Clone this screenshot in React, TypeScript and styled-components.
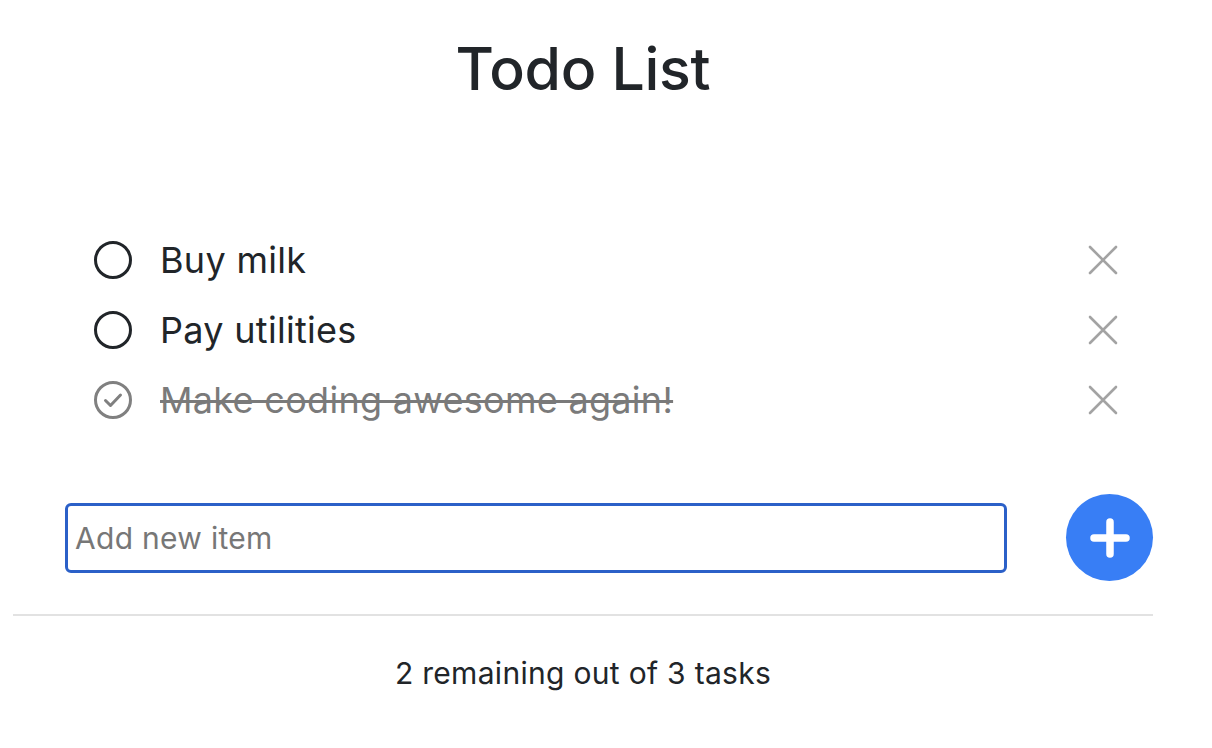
import styled, { createGlobalStyle } from "styled-components";
import { useState } from "react";

const GlobalStyle = createGlobalStyle`
  html, body {
    margin: 0;
    padding: 0;
    background: #ffffff;
    font-family: Inter, "Noto Sans", "Liberation Sans", sans-serif;
    color: #212529;
  }
`;

type Todo = { id: number; text: string; done: boolean };

const TODOS: Todo[] = [
  { id: 1, text: "Buy milk", done: false },
  { id: 2, text: "Pay utilities", done: false },
  { id: 3, text: "Make coding awesome again!", done: true },
];

export default function App() {
  const [todos, setTodos] = useState(TODOS);
  const [value, setValue] = useState("");

  const remaining = todos.filter((t) => !t.done).length;

  const toggle = (id: number) =>
    setTodos(todos.map((t) => (t.id === id ? { ...t, done: !t.done } : t)));

  const remove = (id: number) => setTodos(todos.filter((t) => t.id !== id));

  const handleSubmit = (e: React.FormEvent<HTMLFormElement>) => {
    e.preventDefault();
    if (!value) return;
    setTodos([...todos, { id: Date.now(), text: value, done: false }]);
    setValue("");
  };

  return (
    <Page>
      <GlobalStyle />
      <Title>Todo List</Title>

      <List>
        {todos.map((todo) => (
          <Row key={todo.id}>
            <CheckButton onClick={() => toggle(todo.id)} aria-label="toggle">
              {todo.done ? (
                <svg width="40" height="40" viewBox="0 0 40 40">
                  <circle cx="20" cy="20" r="17.5" fill="none" stroke="#808080" strokeWidth="3" />
                  <path
                    d="M12.5 20.5 L17.5 25.5 L27.5 15"
                    fill="none"
                    stroke="#808080"
                    strokeWidth="3"
                    strokeLinecap="round"
                    strokeLinejoin="round"
                  />
                </svg>
              ) : (
                <svg width="40" height="40" viewBox="0 0 40 40">
                  <circle cx="20" cy="20" r="17.5" fill="none" stroke="#212529" strokeWidth="3" />
                </svg>
              )}
            </CheckButton>
            <Label $done={todo.done}>{todo.text}</Label>
            <RemoveButton onClick={() => remove(todo.id)} aria-label="remove">
              <svg width="30" height="30" viewBox="0 0 30 30">
                <path
                  d="M2 2 L28 28 M28 2 L2 28"
                  stroke="#a3a3a3"
                  strokeWidth="2.6"
                  strokeLinecap="round"
                />
              </svg>
            </RemoveButton>
          </Row>
        ))}
      </List>

      <Form onSubmit={handleSubmit}>
        <Input
          autoFocus
          placeholder="Add new item"
          value={value}
          onChange={(e) => setValue(e.target.value)}
        />
        <AddButton type="submit" aria-label="add">
          <svg width="40" height="40" viewBox="0 0 40 40">
            <path
              d="M20 4 V36 M4 20 H36"
              stroke="#ffffff"
              strokeWidth="7.5"
              strokeLinecap="round"
            />
          </svg>
        </AddButton>
      </Form>

      <Divider />

      <Footer>
        {remaining} remaining out of {todos.length} tasks
      </Footer>
    </Page>
  );
}

const Page = styled.div`
  width: 1140px;
  margin-left: 13px;
  display: flex;
  flex-direction: column;
`;

const Title = styled.h1`
  margin: 30px 0 0;
  font-size: 59px;
  font-weight: 500;
  line-height: 77px;
  text-align: center;
  letter-spacing: -0.3px;
  color: #212529;
`;

const List = styled.ul`
  list-style: none;
  margin: 118px 30px 0 80px;
  padding: 0;
  display: flex;
  flex-direction: column;
`;

const Row = styled.li`
  height: 70px;
  display: flex;
  align-items: center;
`;

const CheckButton = styled.button`
  width: 40px;
  height: 40px;
  padding: 0;
  border: none;
  background: none;
  display: flex;
  align-items: center;
  justify-content: center;
  cursor: pointer;
`;

const Label = styled.span<{ $done: boolean }>`
  flex: 1;
  margin-left: 27px;
  font-size: 36px;
  letter-spacing: 0.3px;
  line-height: 44px;
  color: ${(p) => (p.$done ? "#7a7a7a" : "#212529")};
  text-decoration: ${(p) => (p.$done ? "line-through" : "none")};
  text-decoration-thickness: 3px;
  text-decoration-color: #7a7a7a;
`;

const RemoveButton = styled.button`
  width: 40px;
  height: 40px;
  padding: 0;
  border: none;
  background: none;
  display: flex;
  align-items: center;
  justify-content: center;
  cursor: pointer;
`;

const Form = styled.form`
  margin: 59px 0 0 52px;
  display: flex;
  align-items: center;
  gap: 59px;
`;

const Input = styled.input`
  flex: 1;
  box-sizing: border-box;
  height: 70px;
  border: 3px solid #2b60c8;
  border-radius: 6px;
  padding: 0 7px;
  outline: none;
  font-family: Inter, "Noto Sans", "Liberation Sans", sans-serif;
  font-size: 30px;
  letter-spacing: 0.3px;
  color: #212529;
  caret-color: #000000;

  &::placeholder {
    color: #777777;
  }
`;

const AddButton = styled.button`
  width: 87px;
  height: 87px;
  flex-shrink: 0;
  border: none;
  border-radius: 50%;
  background: #387ef5;
  padding: 0;
  display: flex;
  align-items: center;
  justify-content: center;
  cursor: pointer;
`;

const Divider = styled.hr`
  margin: 33px 0 0;
  border: none;
  height: 2px;
  background: #e2e2e2;
`;

const Footer = styled.p`
  margin: 39px 0 0;
  font-size: 30px;
  letter-spacing: 0.3px;
  line-height: 36px;
  text-align: center;
  color: #212529;
`;
